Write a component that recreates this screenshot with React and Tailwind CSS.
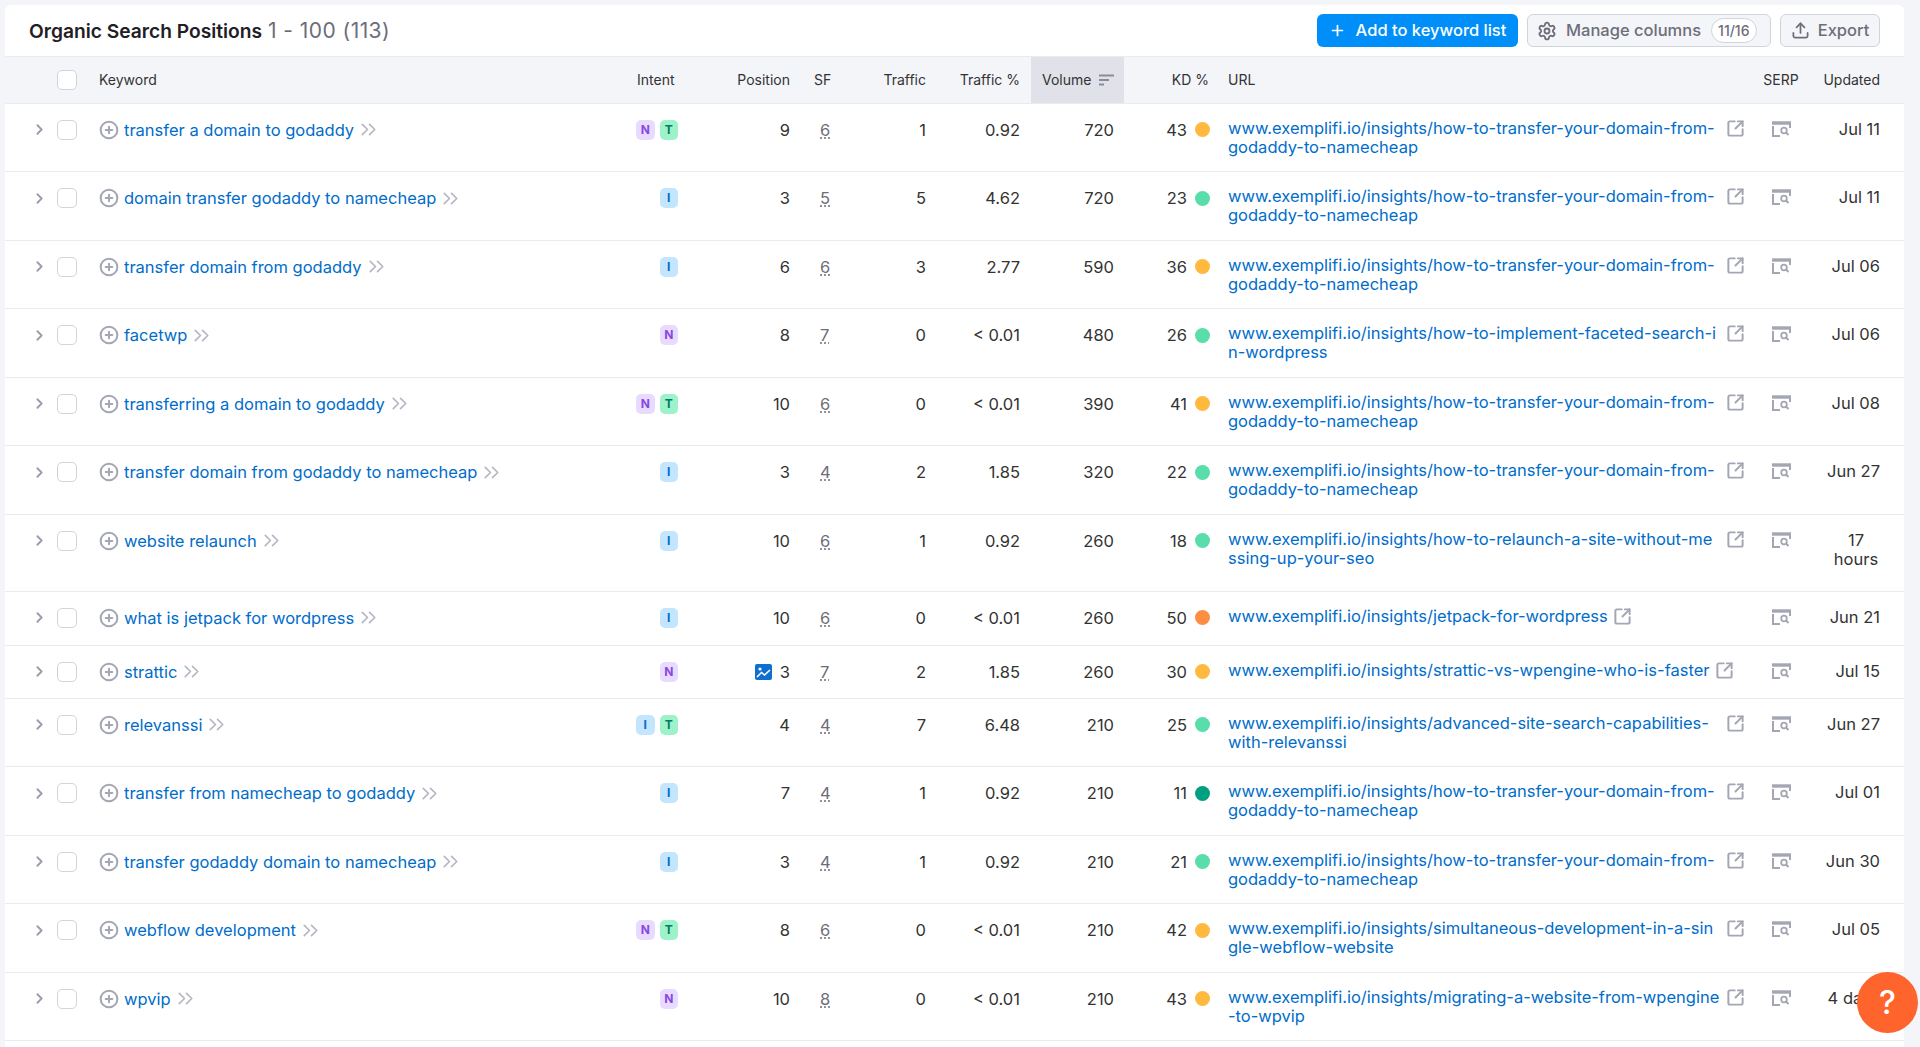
import React from "react";
import { ChevronRight, ChevronsRight, CirclePlus, Plus, Settings, Upload, SquareArrowOutUpRight } from "lucide-react";

const cols = "grid grid-cols-[82px_538px_65px_112px_43px_93px_93px_93px_92px_536px_58px_94px]";

const transfer = "how-to-transfer-your-domain-from-godaddy-to-namecheap";

const rows = [
  { kw: "transfer a domain to godaddy", intent: "NT", pos: "9", sf: "6", traffic: "1", pct: "0.92", vol: "720", kd: "43", dot: "bg-[#ffb93e]", url: transfer, updated: "Jul 11", h: "h-[68.5px]" },
  { kw: "domain transfer godaddy to namecheap", intent: "I", pos: "3", sf: "5", traffic: "5", pct: "4.62", vol: "720", kd: "23", dot: "bg-[#59ddaa]", url: transfer, updated: "Jul 11", h: "h-[68.5px]" },
  { kw: "transfer domain from godaddy", intent: "I", pos: "6", sf: "6", traffic: "3", pct: "2.77", vol: "590", kd: "36", dot: "bg-[#ffb93e]", url: transfer, updated: "Jul 06", h: "h-[68.5px]" },
  { kw: "facetwp", intent: "N", pos: "8", sf: "7", traffic: "0", pct: "< 0.01", vol: "480", kd: "26", dot: "bg-[#59ddaa]", url: "how-to-implement-faceted-search-in-wordpress", updated: "Jul 06", h: "h-[68.5px]" },
  { kw: "transferring a domain to godaddy", intent: "NT", pos: "10", sf: "6", traffic: "0", pct: "< 0.01", vol: "390", kd: "41", dot: "bg-[#ffb93e]", url: transfer, updated: "Jul 08", h: "h-[68.5px]" },
  { kw: "transfer domain from godaddy to namecheap", intent: "I", pos: "3", sf: "4", traffic: "2", pct: "1.85", vol: "320", kd: "22", dot: "bg-[#59ddaa]", url: transfer, updated: "Jun 27", h: "h-[68.5px]" },
  { kw: "website relaunch", intent: "I", pos: "10", sf: "6", traffic: "1", pct: "0.92", vol: "260", kd: "18", dot: "bg-[#59ddaa]", url: "how-to-relaunch-a-site-without-messing-up-your-seo", updated: "17 hours", h: "h-[77px]" },
  { kw: "what is jetpack for wordpress", intent: "I", pos: "10", sf: "6", traffic: "0", pct: "< 0.01", vol: "260", kd: "50", dot: "bg-[#ff8c43]", url: "jetpack-for-wordpress", updated: "Jun 21", h: "h-[54px]" },
  { kw: "strattic", intent: "N", pos: "3", image: true, sf: "7", traffic: "2", pct: "1.85", vol: "260", kd: "30", dot: "bg-[#ffb93e]", url: "strattic-vs-wpengine-who-is-faster", updated: "Jul 15", h: "h-[53px]" },
  { kw: "relevanssi", intent: "IT", pos: "4", sf: "4", traffic: "7", pct: "6.48", vol: "210", kd: "25", dot: "bg-[#59ddaa]", url: "advanced-site-search-capabilities-with-relevanssi", updated: "Jun 27", h: "h-[68.5px]" },
  { kw: "transfer from namecheap to godaddy", intent: "I", pos: "7", sf: "4", traffic: "1", pct: "0.92", vol: "210", kd: "11", dot: "bg-[#009f81]", url: transfer, updated: "Jul 01", h: "h-[68.5px]" },
  { kw: "transfer godaddy domain to namecheap", intent: "I", pos: "3", sf: "4", traffic: "1", pct: "0.92", vol: "210", kd: "21", dot: "bg-[#59ddaa]", url: transfer, updated: "Jun 30", h: "h-[68.5px]" },
  { kw: "webflow development", intent: "NT", pos: "8", sf: "6", traffic: "0", pct: "< 0.01", vol: "210", kd: "42", dot: "bg-[#ffb93e]", url: "simultaneous-development-in-a-single-webflow-website", updated: "Jul 05", h: "h-[68.5px]" },
  { kw: "wpvip", intent: "N", pos: "10", sf: "8", traffic: "0", pct: "< 0.01", vol: "210", kd: "43", dot: "bg-[#ffb93e]", url: "migrating-a-website-from-wpengine-to-wpvip", updated: "4 days", h: "h-[68.5px]" },
];

const badgeStyles = {
  N: "bg-[#e9dbff] text-[#8649e1]",
  T: "bg-[#9ef2c9] text-[#007c65]",
  I: "bg-[#c4e5fe] text-[#006dca]",
};

function Checkbox() {
  return <div className="w-[20px] h-[20px] rounded-[5px] border border-[#d1d4db] bg-white shrink-0" />;
}

function SerpIcon() {
  return (
    <svg width="19" height="16" viewBox="0 0 19 16" fill="none" stroke="#a4a6b3" strokeWidth="2">
      <path d="M1 5v10h7" />
      <path d="M0 2h19" strokeWidth="3.4" />
      <path d="M18 2v5" />
      <circle cx="12" cy="9.5" r="2.8" strokeWidth="1.8" />
      <path d="M14 11.5l2.5 2.5" strokeWidth="2" />
    </svg>
  );
}

function ImageIcon() {
  return (
    <svg width="17" height="16" viewBox="0 0 17 16" className="mr-[8px]">
      <rect width="17" height="16" rx="2" fill="#0f6fd0" />
      <path d="M2 13l4.5-4.5 3 2.5 5.5-5" stroke="#fff" strokeWidth="1.6" fill="none" />
      <circle cx="5" cy="5" r="1.6" fill="#fff" />
    </svg>
  );
}

function Row({ row }) {
  return (
    <div className={`${cols} ${row.h} items-start border-b border-[#e9ebf0] text-[16.5px] leading-5 text-[#333333]`}>
      <div className="flex items-center pt-[16px] pl-[26px] gap-[9px]">
        <ChevronRight size={17} strokeWidth={2.6} className="text-[#9a9caa] shrink-0" />
        <Checkbox />
      </div>
      <div className="flex items-center pt-[16px] pl-3 gap-[5px]">
        <CirclePlus size={20} strokeWidth={2.4} className="text-[#a4a6b3] shrink-0" />
        <span className="text-[#006dca] whitespace-nowrap">{row.kw}</span>
        <ChevronsRight size={25} strokeWidth={1.6} className="text-[#b5b7c2] -my-[4px] -ml-[3px] shrink-0" />
      </div>
      <div className="flex justify-end gap-[5px] pt-[16px] pr-3">
        {row.intent.split("").map((c) => (
          <span key={c} className={`w-[18.5px] h-[20px] rounded-[5px] flex items-center justify-center text-[12px] font-bold ${badgeStyles[c]}`}>
            {c}
          </span>
        ))}
      </div>
      <div className="flex justify-end items-center pt-[16px] pr-3">
        {row.image && <ImageIcon />}
        {row.pos}
      </div>
      <div className="pt-[16px] pl-[18px] text-[#6c6e79]">
        <span className="underline decoration-dotted underline-offset-2">{row.sf}</span>
      </div>
      <div className="pt-[16px] pr-3 text-right">{row.traffic}</div>
      <div className="pt-[16px] pr-[11px] text-right">{row.pct}</div>
      <div className="pt-[16px] pr-[10px] text-right">{row.vol}</div>
      <div className="flex justify-end items-center gap-[8px] pt-[16px] pr-[6px]">
        {row.kd}
        <span className={`w-[15px] h-[15px] rounded-full ${row.dot}`} />
      </div>
      <div className="flex items-start pt-[15px] pl-3 gap-[5px] leading-[19px]">
        <span className="max-w-[493px] break-all text-[#006dca]">{`www.exemplifi.io/insights/${row.url}`}</span>
        <SquareArrowOutUpRight size={19} strokeWidth={2.5} className="text-[#a4a6b3] shrink-0" />
      </div>
      <div className="flex justify-center pt-[17px]">
        <SerpIcon />
      </div>
      <div className="pt-[16px] pr-6 text-right leading-[19px]">
        {row.updated === "17 hours" ? <span className="inline-block w-[48px] text-center">17 hours</span> : <span className="whitespace-nowrap">{row.updated}</span>}
      </div>
    </div>
  );
}

function App() {
  return (
    <div className="h-[1047px] overflow-hidden bg-[#f4f5f9] pl-[5px] pt-[5px] font-['Inter',sans-serif]">
      <div className="w-[1899px] h-[1042px] rounded-t-[6px] bg-white overflow-hidden">
        <div className="h-[51px] flex items-center justify-between pl-6 pr-6">
          <div className="flex items-baseline gap-[6px] whitespace-nowrap">
            <span className="text-[19.2px] font-semibold text-[#1f2025]">Organic Search Positions</span>
            <span className="text-[21px] tracking-[0.45px] text-[#6c6e79]">1 - 100 (113)</span>
          </div>
          <div className="flex items-center gap-[9px] text-[16.5px]">
            <button className="w-[201px] h-[33px] rounded-[6px] bg-[#008ff8] text-white font-medium flex items-center justify-center gap-[10px]">
              <Plus size={17} strokeWidth={2.4} />
              Add to keyword list
            </button>
            <button className="w-[244px] h-[33px] rounded-[6px] border border-[#d1d4db] bg-[#f4f5f9] text-[#6c6e79] font-medium flex items-center pl-[9px] gap-[9px]">
              <Settings size={20} strokeWidth={2.2} />
              Manage columns
              <span className="ml-[1px] px-[6px] h-[25px] rounded-full border border-[#d1d4db] bg-white text-[14px] text-[#6c6e79] flex items-center">11/16</span>
            </button>
            <button className="w-[100px] h-[33px] rounded-[6px] border border-[#d1d4db] bg-[#f4f5f9] text-[#6c6e79] font-medium flex items-center justify-center gap-[8px]">
              <Upload size={19} strokeWidth={2.2} />
              Export
            </button>
          </div>
        </div>

        <div className={`${cols} h-[47.5px] items-center bg-[#f4f5f9] border-y border-[#e9ebf0] text-[14px] text-[#333333]`}>
          <div className="flex pl-[52px]">
            <Checkbox />
          </div>
          <div className="pl-3">Keyword</div>
          <div className="pl-3">Intent</div>
          <div className="pr-3 text-right">Position</div>
          <div className="pl-3">SF</div>
          <div className="pr-3 text-right">Traffic</div>
          <div className="pr-[11px] text-right">Traffic %</div>
          <div className="h-full bg-[#e0e1e9] pl-[11px] flex items-center gap-[8px]">
            Volume
            <svg width="15" height="12" viewBox="0 0 15 12" fill="none" stroke="#8a8c99" strokeWidth="1.8">
              <path d="M0 1.5h15M0 6h10M0 10.5h5" />
            </svg>
          </div>
          <div className="pr-[7px] text-right">KD %</div>
          <div className="pl-3">URL</div>
          <div className="text-center">SERP</div>
          <div className="pr-6 text-right">Updated</div>
        </div>

        {rows.map((row) => (
          <Row key={row.kw} row={row} />
        ))}
      </div>

      <button className="fixed left-[1857px] top-[972px] w-[61px] h-[61px] rounded-full bg-[#ff642d] text-white text-[32px] font-medium flex items-center justify-center">
        ?
      </button>
    </div>
  );
}

export default App;
